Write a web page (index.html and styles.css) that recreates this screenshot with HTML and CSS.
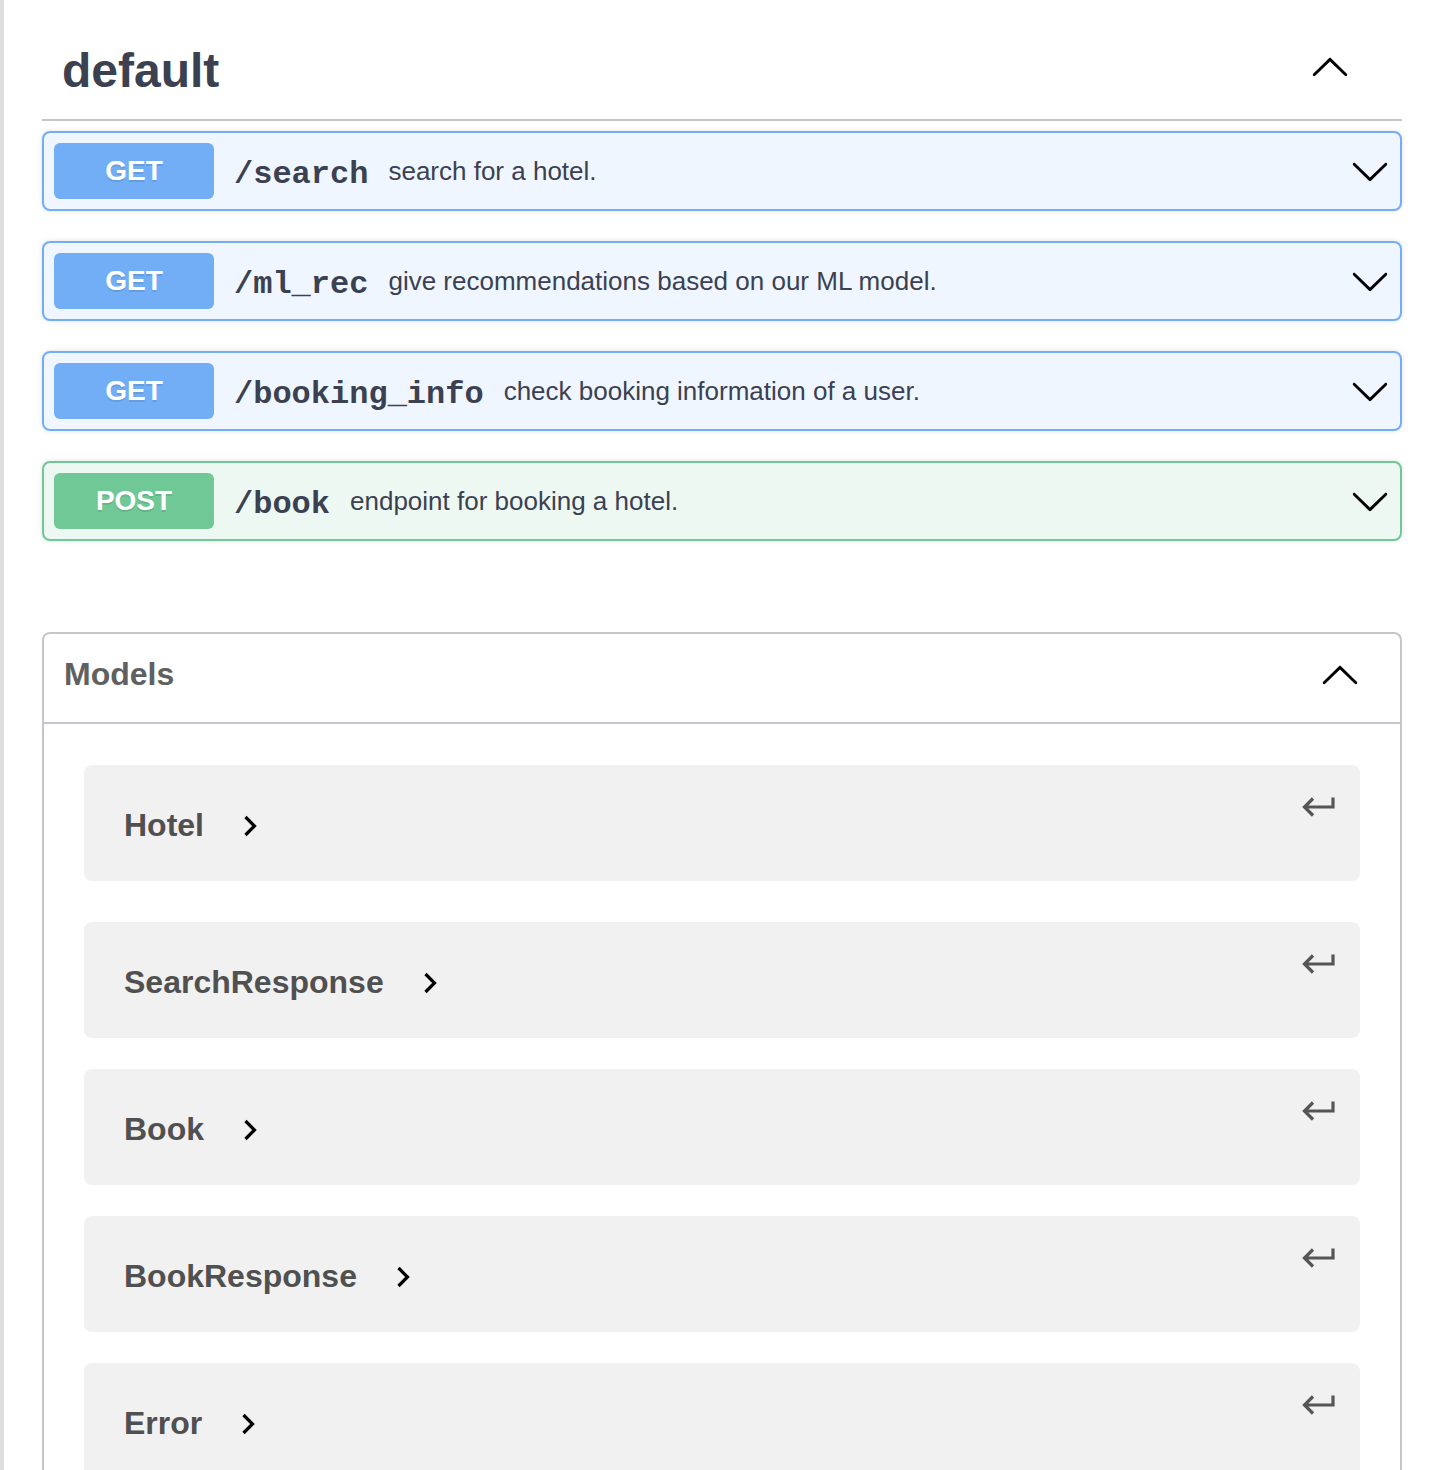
FILE: index.html
```html
<!DOCTYPE html>
<html>
<head>
<meta charset="utf-8">
<link rel="stylesheet" href="styles.css">
</head>
<body>
<div class="page">
  <div class="tag-section">
    <div class="tag-heading">
      <h3 class="tag-title">default</h3>
      <svg class="arrow arrow-tag" width="40" height="40" viewBox="0 0 20 20"><path transform="rotate(180 10 10)" d="M17.418 6.109c.272-.268.709-.268.979 0s.271.701 0 .969l-7.908 7.83c-.27.268-.707.268-.979 0l-7.908-7.830c-.27-.268-.27-.701 0-.969.271-.268.709-.268.979 0L10 13.25l7.418-7.141z"/></svg>
    </div>

    <div class="opblocks">
      <div class="opblock get">
        <span class="method">GET</span>
        <span class="path">/search</span>
        <span class="desc">search for a hotel.</span>
        <svg class="arrow arrow-op" width="40" height="40" viewBox="0 0 20 20"><path d="M17.418 6.109c.272-.268.709-.268.979 0s.271.701 0 .969l-7.908 7.83c-.27.268-.707.268-.979 0l-7.908-7.83c-.27-.268-.27-.701 0-.969.271-.268.709-.268.979 0L10 13.25l7.418-7.141z"/></svg>
      </div>
      <div class="opblock get">
        <span class="method">GET</span>
        <span class="path">/ml_rec</span>
        <span class="desc">give recommendations based on our ML model.</span>
        <svg class="arrow arrow-op" width="40" height="40" viewBox="0 0 20 20"><path d="M17.418 6.109c.272-.268.709-.268.979 0s.271.701 0 .969l-7.908 7.83c-.27.268-.707.268-.979 0l-7.908-7.83c-.27-.268-.27-.701 0-.969.271-.268.709-.268.979 0L10 13.25l7.418-7.141z"/></svg>
      </div>
      <div class="opblock get">
        <span class="method">GET</span>
        <span class="path">/booking_info</span>
        <span class="desc">check booking information of a user.</span>
        <svg class="arrow arrow-op" width="40" height="40" viewBox="0 0 20 20"><path d="M17.418 6.109c.272-.268.709-.268.979 0s.271.701 0 .969l-7.908 7.83c-.27.268-.707.268-.979 0l-7.908-7.83c-.27-.268-.27-.701 0-.969.271-.268.709-.268.979 0L10 13.25l7.418-7.141z"/></svg>
      </div>
      <div class="opblock post">
        <span class="method">POST</span>
        <span class="path">/book</span>
        <span class="desc">endpoint for booking a hotel.</span>
        <svg class="arrow arrow-op" width="40" height="40" viewBox="0 0 20 20"><path d="M17.418 6.109c.272-.268.709-.268.979 0s.271.701 0 .969l-7.908 7.83c-.27.268-.707.268-.979 0l-7.908-7.83c-.27-.268-.27-.701 0-.969.271-.268.709-.268.979 0L10 13.25l7.418-7.141z"/></svg>
      </div>
    </div>
  </div>

  <section class="models">
    <div class="models-heading">
      <h4 class="models-title">Models</h4>
      <svg class="arrow arrow-models" width="40" height="40" viewBox="0 0 20 20"><path transform="rotate(180 10 10)" d="M17.418 6.109c.272-.268.709-.268.979 0s.271.701 0 .969l-7.908 7.83c-.27.268-.707.268-.979 0l-7.908-7.83c-.27-.268-.27-.701 0-.969.271-.268.709-.268.979 0L10 13.25l7.418-7.141z"/></svg>
    </div>
    <div class="models-list">
      <div class="model first">
        <div class="model-title"><span class="model-name">Hotel</span><svg class="chev" width="14" height="24" viewBox="0 0 14 24"><polyline points="2.5,3 11.5,12 2.5,21"/></svg></div>
        <svg class="jump" width="36" height="24" viewBox="0 0 36 24"><path d="M32 1.5 V11 H3.5 M12 2.5 L3.5 11 L12 19.5"/></svg>
      </div>
      <div class="model">
        <div class="model-title"><span class="model-name">SearchResponse</span><svg class="chev" width="14" height="24" viewBox="0 0 14 24"><polyline points="2.5,3 11.5,12 2.5,21"/></svg></div>
        <svg class="jump" width="36" height="24" viewBox="0 0 36 24"><path d="M32 1.5 V11 H3.5 M12 2.5 L3.5 11 L12 19.5"/></svg>
      </div>
      <div class="model">
        <div class="model-title"><span class="model-name">Book</span><svg class="chev" width="14" height="24" viewBox="0 0 14 24"><polyline points="2.5,3 11.5,12 2.5,21"/></svg></div>
        <svg class="jump" width="36" height="24" viewBox="0 0 36 24"><path d="M32 1.5 V11 H3.5 M12 2.5 L3.5 11 L12 19.5"/></svg>
      </div>
      <div class="model">
        <div class="model-title"><span class="model-name">BookResponse</span><svg class="chev" width="14" height="24" viewBox="0 0 14 24"><polyline points="2.5,3 11.5,12 2.5,21"/></svg></div>
        <svg class="jump" width="36" height="24" viewBox="0 0 36 24"><path d="M32 1.5 V11 H3.5 M12 2.5 L3.5 11 L12 19.5"/></svg>
      </div>
      <div class="model">
        <div class="model-title"><span class="model-name">Error</span><svg class="chev" width="14" height="24" viewBox="0 0 14 24"><polyline points="2.5,3 11.5,12 2.5,21"/></svg></div>
        <svg class="jump" width="36" height="24" viewBox="0 0 36 24"><path d="M32 1.5 V11 H3.5 M12 2.5 L3.5 11 L12 19.5"/></svg>
      </div>
    </div>
  </section>
</div>
</body>
</html>
```
FILE: styles.css
```css
html, body {
  margin: 0;
  padding: 0;
  background: #ffffff;
}

body {
  font-family: "Liberation Sans", Arial, sans-serif;
  color: #3b4151;
}

.page {
  border-left: 4px solid #dedede;
  padding: 0 40px 60px 38px;
  min-height: 1470px;
  box-sizing: border-box;
}

/* tag heading */
.tag-heading {
  display: flex;
  align-items: center;
  justify-content: space-between;
  padding: 44px 0 21px 20px;
  border-bottom: 2px solid #c4c6cb;
  margin-bottom: 10px;
}

.tag-title {
  margin: 0;
  font-size: 48px;
  line-height: 54px;
  font-weight: 700;
  color: #3b4151;
}

.arrow {
  display: block;
  flex: none;
  fill: #000000;
}

.arrow-tag {
  margin-right: 52px;
  margin-bottom: 6px;
}

/* operations */
.opblocks {
  padding-bottom: 1px;
}

.opblock {
  display: flex;
  align-items: center;
  height: 80px;
  box-sizing: border-box;
  padding: 0 10px;
  margin-bottom: 30px;
  border: 2px solid #72aef6;
  border-radius: 8px;
  background: #eff6ff;
  box-shadow: 0 0 5px rgba(0, 0, 0, 0.12);
}

.opblock.post {
  border-color: #6fc896;
  background: #eef8f2;
}

.method {
  flex: none;
  width: 160px;
  height: 56px;
  line-height: 56px;
  text-align: center;
  border-radius: 6px;
  background: #72aef6;
  color: #ffffff;
  font-size: 28px;
  font-weight: 700;
  text-shadow: 0 2px 0 rgba(0, 0, 0, 0.1);
}

.opblock.post .method {
  background: #6fc896;
}

.path {
  padding: 6px 20px 0;
  font-family: "Liberation Mono", "Courier New", monospace;
  font-weight: 700;
  font-size: 32px;
  color: #3b4151;
}

.desc {
  flex: 1;
  font-size: 26px;
  color: #3b4151;
}

.arrow-op {
  margin-left: auto;
}

/* models */
.models {
  margin-top: 60px;
  border: 2px solid #c4c6cb;
  border-radius: 8px;
  border-bottom: none;
  border-bottom-left-radius: 0;
  border-bottom-right-radius: 0;
}

.models-heading {
  display: flex;
  align-items: flex-start;
  justify-content: space-between;
  padding: 22px 40px 26px 20px;
  border-bottom: 2px solid #c4c6cb;
}

.models-title {
  margin: 0;
  font-size: 32px;
  font-weight: 700;
  color: #606060;
}

.models-list {
  padding: 41px 40px 0 40px;
}

.model {
  display: flex;
  justify-content: space-between;
  align-items: center;
  min-height: 116px;
  box-sizing: border-box;
  padding: 4px 23px 0 40px;
  margin-bottom: 31px;
  border-radius: 8px;
  background: #f1f1f1;
}

.model.first {
  margin-bottom: 41px;
}

.model-title {
  display: flex;
  align-items: center;
}

.model-name {
  font-size: 32px;
  font-weight: 700;
  color: #505050;
}

.chev {
  display: block;
  margin-left: 39px;
  margin-top: 2px;
  fill: none;
  stroke: #000000;
  stroke-width: 3.2;
}

.jump {
  display: block;
  align-self: flex-start;
  margin-top: 27px;
  fill: none;
  stroke: #555555;
  stroke-width: 3.2;
}
```
